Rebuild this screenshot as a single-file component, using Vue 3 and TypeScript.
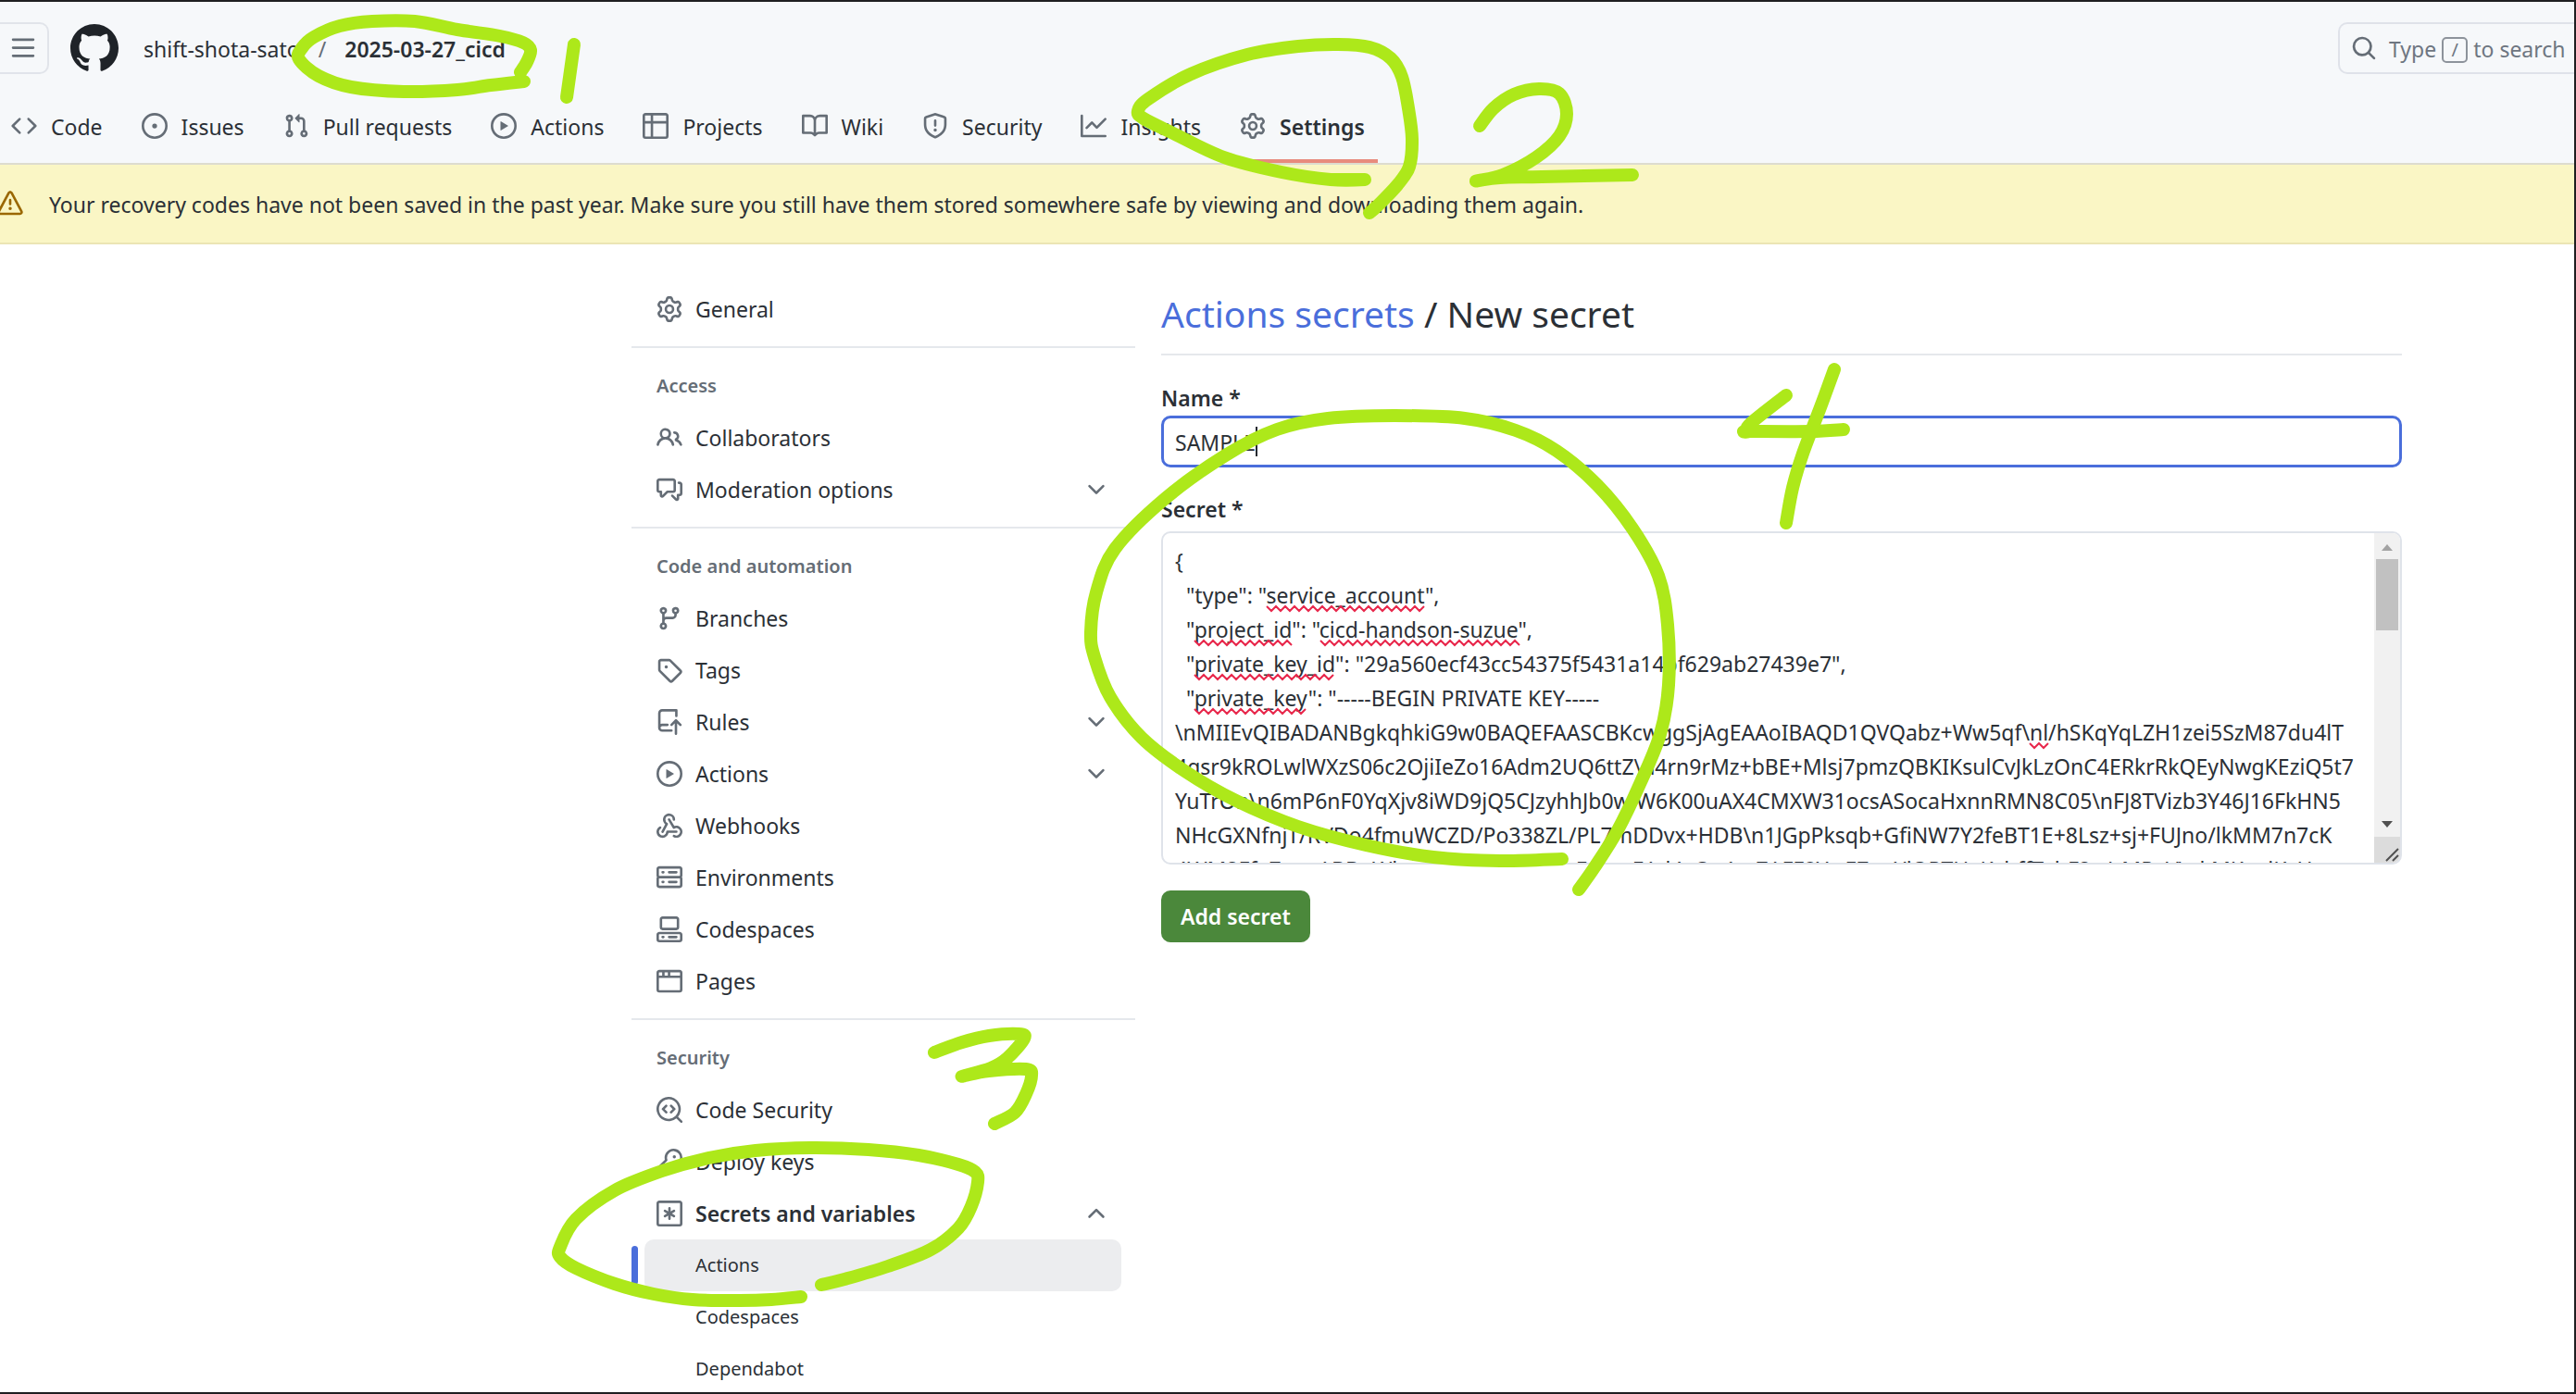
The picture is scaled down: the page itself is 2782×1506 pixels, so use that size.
<script setup lang="ts">
import { computed, ref } from 'vue'

interface Tab {
  label: string
  icon: string
  current?: boolean
}

interface NavItem {
  label: string
  icon: string
  toggle?: 'open' | 'closed'
  children?: { label: string; current?: boolean }[]
}

interface NavGroup {
  title: string
  items: NavItem[]
}

type Point = [number, number]

const icons: Record<string, string> = {
  mark: 'M8 0c4.42 0 8 3.58 8 8a8.013 8.013 0 0 1-5.45 7.59c-.4.08-.55-.17-.55-.38 0-.27.01-1.13.01-2.2 0-.75-.25-1.23-.54-1.48 1.78-.2 3.65-.88 3.65-3.95 0-.88-.31-1.59-.82-2.15.08-.2.36-1.02-.08-2.12 0 0-.67-.22-2.2.82-.64-.18-1.32-.27-2-.27-.68 0-1.36.09-2 .27-1.53-1.03-2.2-.82-2.2-.82-.44 1.1-.16 1.92-.08 2.12-.51.56-.82 1.28-.82 2.15 0 3.06 1.86 3.75 3.64 3.95-.23.2-.44.55-.51 1.07-.46.21-1.61.55-2.33-.66-.15-.24-.6-.83-1.23-.82-.67.01-.27.38.01.53.34.19.73.9.82 1.13.16.45.68 1.31 2.69.94 0 .67.01 1.3.01 1.49 0 .21-.15.45-.55.38A7.995 7.995 0 0 1 0 8c0-4.42 3.58-8 8-8Z',
  menu: 'M1 2.75A.75.75 0 0 1 1.75 2h12.5a.75.75 0 0 1 0 1.5H1.75A.75.75 0 0 1 1 2.75Zm0 5A.75.75 0 0 1 1.75 7h12.5a.75.75 0 0 1 0 1.5H1.75A.75.75 0 0 1 1 7.75ZM1.75 12h12.5a.75.75 0 0 1 0 1.5H1.75a.75.75 0 0 1 0-1.5Z',
  search: 'M10.68 11.74a6 6 0 0 1-7.922-8.982 6 6 0 0 1 8.982 7.922l3.04 3.04a.749.749 0 0 1-.326 1.275.749.749 0 0 1-.734-.215ZM11.5 7a4.499 4.499 0 1 0-8.997 0A4.499 4.499 0 0 0 11.5 7Z',
  code: 'm11.28 3.22 4.25 4.25a.75.75 0 0 1 0 1.06l-4.25 4.25a.749.749 0 0 1-1.275-.326.749.749 0 0 1 .215-.734L13.94 8l-3.72-3.72a.749.749 0 0 1 .326-1.275.749.749 0 0 1 .734.215Zm-6.56 0a.751.751 0 0 1 1.042.018.751.751 0 0 1 .018 1.042L2.06 8l3.72 3.72a.749.749 0 0 1-.326 1.275.749.749 0 0 1-.734-.215L.47 8.53a.75.75 0 0 1 0-1.06Z',
  issue: 'M8 9.5a1.5 1.5 0 1 0 0-3 1.5 1.5 0 0 0 0 3ZM8 0a8 8 0 1 1 0 16A8 8 0 0 1 8 0ZM1.5 8a6.5 6.5 0 1 0 13 0 6.5 6.5 0 0 0-13 0Z',
  pull: 'M1.5 3.25a2.25 2.25 0 1 1 3 2.122v5.256a2.251 2.251 0 1 1-1.5 0V5.372A2.25 2.25 0 0 1 1.5 3.25Zm5.677-.177L9.573.677A.25.25 0 0 1 10 .854V2.5h1A2.5 2.5 0 0 1 13.5 5v5.628a2.251 2.251 0 1 1-1.5 0V5a1 1 0 0 0-1-1h-1v1.646a.25.25 0 0 1-.427.177L7.177 3.427a.25.25 0 0 1 0-.354ZM3.75 2.5a.75.75 0 1 0 0 1.5.75.75 0 0 0 0-1.5Zm0 9.5a.75.75 0 1 0 0 1.5.75.75 0 0 0 0-1.5Zm8.25.75a.75.75 0 1 0 1.5 0 .75.75 0 0 0-1.5 0Z',
  play: 'M8 0a8 8 0 1 1 0 16A8 8 0 0 1 8 0ZM1.5 8a6.5 6.5 0 1 0 13 0 6.5 6.5 0 0 0-13 0Zm4.879-2.773 4.264 2.559a.25.25 0 0 1 0 .428l-4.264 2.559A.25.25 0 0 1 6 10.559V5.442a.25.25 0 0 1 .379-.215Z',
  table: 'M0 1.75C0 .784.784 0 1.75 0h12.5C15.216 0 16 .784 16 1.75v12.5A1.75 1.75 0 0 1 14.25 16H1.75A1.75 1.75 0 0 1 0 14.25ZM6.5 6.5v8h7.75a.25.25 0 0 0 .25-.25V6.5Zm8-1.5V1.75a.25.25 0 0 0-.25-.25H6.5V5Zm-13 1.5v7.75c0 .138.112.25.25.25H5v-8ZM5 5V1.5H1.75a.25.25 0 0 0-.25.25V5Z',
  book: 'M0 1.75A.75.75 0 0 1 .75 1h4.253c1.227 0 2.317.59 3 1.501A3.743 3.743 0 0 1 11.006 1h4.245a.75.75 0 0 1 .75.75v10.5a.75.75 0 0 1-.75.75h-4.507a2.25 2.25 0 0 0-1.591.659l-.622.621a.75.75 0 0 1-1.06 0l-.622-.621A2.25 2.25 0 0 0 5.258 13H.75a.75.75 0 0 1-.75-.75Zm7.251 10.324.004-5.073-.002-2.253A2.25 2.25 0 0 0 5.003 2.5H1.5v9h3.757a3.75 3.75 0 0 1 1.994.574ZM8.755 4.75l-.004 7.322a3.752 3.752 0 0 1 1.992-.572H14.5v-9h-3.495a2.25 2.25 0 0 0-2.25 2.25Z',
  shield: 'M7.467.133a1.748 1.748 0 0 1 1.066 0l5.25 1.68A1.75 1.75 0 0 1 15 3.48V7c0 1.566-.32 3.182-1.303 4.682-.983 1.498-2.585 2.813-5.032 3.855a1.697 1.697 0 0 1-1.33 0c-2.447-1.042-4.049-2.357-5.032-3.855C1.32 10.182 1 8.566 1 7V3.48a1.75 1.75 0 0 1 1.217-1.667Zm.61 1.429a.25.25 0 0 0-.153 0l-5.25 1.68a.25.25 0 0 0-.174.238V7c0 1.358.275 2.666 1.057 3.86.784 1.194 2.121 2.34 4.366 3.297a.196.196 0 0 0 .154 0c2.245-.956 3.582-2.104 4.366-3.298C13.225 9.666 13.5 8.36 13.5 7V3.48a.251.251 0 0 0-.174-.237l-5.25-1.68ZM8.75 4.75v3a.75.75 0 0 1-1.5 0v-3a.75.75 0 0 1 1.5 0ZM9 10.5a1 1 0 1 1-2 0 1 1 0 0 1 2 0Z',
  graph: 'M1.5 1.75V13.5h13.75a.75.75 0 0 1 0 1.5H.75a.75.75 0 0 1-.75-.75V1.75a.75.75 0 0 1 1.5 0Zm14.28 2.53-5.25 5.25a.75.75 0 0 1-1.06 0L7 7.06 4.28 9.78a.751.751 0 0 1-1.042-.018.751.751 0 0 1-.018-1.042l3.25-3.25a.75.75 0 0 1 1.06 0L10 7.94l4.72-4.72a.751.751 0 0 1 1.042.018.751.751 0 0 1 .018 1.042Z',
  gear: 'M8 0a8.2 8.2 0 0 1 .701.031C9.444.095 9.99.645 10.16 1.29l.288 1.107c.018.066.079.158.212.224.231.114.454.243.668.386.123.082.233.09.299.071l1.103-.303c.644-.176 1.392.021 1.82.63.27.385.506.792.704 1.218.315.675.111 1.422-.364 1.891l-.814.806c-.049.048-.098.147-.088.294.016.257.016.515 0 .772-.01.147.038.246.088.294l.814.806c.475.469.679 1.216.364 1.891a7.977 7.977 0 0 1-.704 1.217c-.428.61-1.176.807-1.82.63l-1.102-.302c-.067-.019-.177-.011-.3.071a5.909 5.909 0 0 1-.668.386c-.133.066-.194.158-.211.224l-.29 1.106c-.168.646-.715 1.196-1.458 1.26a8.006 8.006 0 0 1-1.402 0c-.743-.064-1.289-.614-1.458-1.26l-.289-1.106c-.018-.066-.079-.158-.212-.224a5.738 5.738 0 0 1-.668-.386c-.123-.082-.233-.09-.299-.071l-1.103.303c-.644.176-1.392-.021-1.82-.63a8.12 8.12 0 0 1-.704-1.218c-.315-.675-.111-1.422.363-1.891l.815-.806c.05-.048.098-.147.088-.294a6.214 6.214 0 0 1 0-.772c.01-.147-.038-.246-.088-.294l-.815-.806C.635 6.045.431 5.298.746 4.623a7.92 7.92 0 0 1 .704-1.217c.428-.61 1.176-.807 1.82-.63l1.102.302c.067.019.177.011.3-.071.214-.143.437-.272.668-.386.133-.066.194-.158.211-.224l.29-1.106C6.009.645 6.556.095 7.299.03 7.53.01 7.764 0 8 0Zm-.571 1.525c-.036.003-.108.036-.137.146l-.289 1.105c-.147.561-.549.967-.998 1.189-.173.086-.34.183-.5.29-.417.278-.97.423-1.529.27l-1.103-.303c-.109-.03-.175.016-.195.045-.22.312-.412.644-.573.99-.014.031-.021.11.059.19l.815.806c.411.406.562.957.53 1.456a4.709 4.709 0 0 0 0 .582c.032.499-.119 1.05-.53 1.456l-.815.806c-.081.08-.073.159-.059.19.162.346.353.677.573.989.02.03.085.076.195.046l1.102-.303c.56-.153 1.113-.008 1.53.27.161.107.328.204.501.29.447.222.85.629.997 1.189l.289 1.105c.029.109.101.143.137.146a6.6 6.6 0 0 0 1.142 0c.036-.003.108-.036.137-.146l.289-1.105c.147-.561.549-.967.998-1.189.173-.086.34-.183.5-.29.417-.278.97-.423 1.529-.27l1.103.303c.109.029.175-.016.195-.045.22-.313.411-.644.573-.99.014-.031.021-.11-.059-.19l-.815-.806c-.411-.406-.562-.957-.53-1.456a4.709 4.709 0 0 0 0-.582c-.032-.499.119-1.05.53-1.456l.815-.806c.081-.08.073-.159.059-.19a6.464 6.464 0 0 0-.573-.989c-.02-.03-.085-.076-.195-.046l-1.102.303c-.56.153-1.113.008-1.53-.27a4.44 4.44 0 0 0-.501-.29c-.447-.222-.85-.629-.997-1.189l-.289-1.105c-.029-.11-.101-.143-.137-.146a6.6 6.6 0 0 0-1.142 0ZM11 8a3 3 0 1 1-6 0 3 3 0 0 1 6 0ZM9.5 8a1.5 1.5 0 1 0-3.001.001A1.5 1.5 0 0 0 9.5 8Z',
  alert: 'M6.457 1.047c.659-1.234 2.427-1.234 3.086 0l6.082 11.378A1.75 1.75 0 0 1 14.082 15H1.918a1.75 1.75 0 0 1-1.543-2.575Zm1.763.707a.25.25 0 0 0-.44 0L1.698 13.132a.25.25 0 0 0 .22.368h12.164a.25.25 0 0 0 .22-.368Zm.53 3.996v2.5a.75.75 0 0 1-1.5 0v-2.5a.75.75 0 0 1 1.5 0ZM9 11a1 1 0 1 1-2 0 1 1 0 0 1 2 0Z',
  people: 'M2 5.5a3.5 3.5 0 1 1 5.898 2.549 5.508 5.508 0 0 1 3.034 4.084.75.75 0 1 1-1.482.235 4 4 0 0 0-7.9 0 .75.75 0 0 1-1.482-.236A5.507 5.507 0 0 1 3.102 8.05 3.493 3.493 0 0 1 2 5.5ZM11 4a3.001 3.001 0 0 1 2.22 5.018 5.01 5.01 0 0 1 2.56 3.012.749.749 0 0 1-.885.954.752.752 0 0 1-.549-.514 3.507 3.507 0 0 0-2.522-2.372.75.75 0 0 1-.574-.73v-.352a.75.75 0 0 1 .416-.672A1.5 1.5 0 0 0 11 5.5.75.75 0 0 1 11 4Zm-5.5-.5a2 2 0 1 0-.001 3.999A2 2 0 0 0 5.5 3.5Z',
  discussion: 'M1.75 1h8.5c.966 0 1.75.784 1.75 1.75v5.5A1.75 1.75 0 0 1 10.25 10H7.061l-2.574 2.573A1.458 1.458 0 0 1 2 11.543V10h-.25A1.75 1.75 0 0 1 0 8.25v-5.5C0 1.784.784 1 1.75 1ZM1.5 2.75v5.5c0 .138.112.25.25.25h1a.75.75 0 0 1 .75.75v2.19l2.72-2.72a.749.749 0 0 1 .53-.22h3.5a.25.25 0 0 0 .25-.25v-5.5a.25.25 0 0 0-.25-.25h-8.5a.25.25 0 0 0-.25.25Zm13 2a.25.25 0 0 0-.25-.25h-.5a.75.75 0 0 1 0-1.5h.5c.966 0 1.75.784 1.75 1.75v5.5A1.75 1.75 0 0 1 14.25 12H14v1.543a1.458 1.458 0 0 1-2.487 1.03L9.22 12.28a.749.749 0 0 1 .326-1.275.749.749 0 0 1 .734.215l2.22 2.22v-2.19a.75.75 0 0 1 .75-.75h1a.25.25 0 0 0 .25-.25Z',
  branch: 'M9.5 3.25a2.25 2.25 0 1 1 3 2.122V6A2.5 2.5 0 0 1 10 8.5H6a1 1 0 0 0-1 1v1.128a2.251 2.251 0 1 1-1.5 0V5.372a2.25 2.25 0 1 1 1.5 0v1.836A2.493 2.493 0 0 1 6 7h4a1 1 0 0 0 1-1v-.628A2.25 2.25 0 0 1 9.5 3.25Zm-6 0a.75.75 0 1 0 1.5 0 .75.75 0 0 0-1.5 0Zm8.25-.75a.75.75 0 1 0 0 1.5.75.75 0 0 0 0-1.5ZM4.25 12a.75.75 0 1 0 0 1.5.75.75 0 0 0 0-1.5Z',
  tag: 'M1 7.775V2.75C1 1.784 1.784 1 2.75 1h5.025c.464 0 .91.184 1.238.513l6.25 6.25a1.75 1.75 0 0 1 0 2.474l-5.026 5.026a1.75 1.75 0 0 1-2.474 0l-6.25-6.25A1.752 1.752 0 0 1 1 7.775Zm1.5 0c0 .066.026.13.073.177l6.25 6.25a.25.25 0 0 0 .354 0l5.025-5.025a.25.25 0 0 0 0-.354l-6.25-6.25a.25.25 0 0 0-.177-.073H2.75a.25.25 0 0 0-.25.25ZM6 5a1 1 0 1 1 0 2 1 1 0 0 1 0-2Z',
  rules: 'M1 2.5A2.5 2.5 0 0 1 3.5 0h8.75a.75.75 0 0 1 .75.75v3.5a.75.75 0 0 1-1.5 0V1.5h-8a1 1 0 0 0-1 1v6.708A2.493 2.493 0 0 1 3.5 9h3.25a.75.75 0 0 1 0 1.5H3.5a1 1 0 0 0 0 2h5.75a.75.75 0 0 1 0 1.5H3.5A2.5 2.5 0 0 1 1 11.5Zm13.23 7.79-1.48-1.48v6.44a.75.75 0 0 1-1.5 0V8.81L9.77 10.29a.751.751 0 0 1-1.042-.018.751.751 0 0 1-.018-1.042l2.76-2.76a.75.75 0 0 1 1.06 0l2.76 2.76a.749.749 0 0 1-.326 1.275.749.749 0 0 1-.734-.215Z',
  webhook: 'M5.5 4.25a2.25 2.25 0 0 1 4.5 0 .75.75 0 0 0 1.5 0 3.75 3.75 0 1 0-6.14 2.889l-2.272 4.258a.75.75 0 0 0 1.324.706L7 7.25a.75.75 0 0 0-.309-1.015A2.25 2.25 0 0 1 5.5 4.25ZM7.364 3.607a.75.75 0 0 1 1.03.257l2.608 4.349a3.75 3.75 0 1 1-.628 6.785.75.75 0 0 1 .752-1.299 2.25 2.25 0 1 0-.033-3.88.75.75 0 0 1-1.03-.256L7.107 4.636a.75.75 0 0 1 .257-1.03ZM2.9 8.776A.75.75 0 0 1 2.625 9.8 2.25 2.25 0 1 0 6 11.75a.75.75 0 0 1 .75-.751h5.5a.75.75 0 0 1 0 1.5H7.425a3.751 3.751 0 1 1-5.55-3.998.75.75 0 0 1 1.024.274Z',
  server: 'M1.75 1h12.5c.966 0 1.75.784 1.75 1.75v4c0 .372-.116.717-.314 1 .198.283.314.628.314 1v4a1.75 1.75 0 0 1-1.75 1.75H1.75A1.75 1.75 0 0 1 0 12.75v-4c0-.358.109-.707.314-1a1.739 1.739 0 0 1-.314-1v-4C0 1.784.784 1 1.75 1ZM1.5 2.75v4c0 .138.112.25.25.25h12.5a.25.25 0 0 0 .25-.25v-4a.25.25 0 0 0-.25-.25H1.75a.25.25 0 0 0-.25.25Zm.25 5.75a.25.25 0 0 0-.25.25v4c0 .138.112.25.25.25h12.5a.25.25 0 0 0 .25-.25v-4a.25.25 0 0 0-.25-.25ZM7 4.75A.75.75 0 0 1 7.75 4h4.5a.75.75 0 0 1 0 1.5h-4.5A.75.75 0 0 1 7 4.75ZM7.75 10h4.5a.75.75 0 0 1 0 1.5h-4.5a.75.75 0 0 1 0-1.5ZM3 4.75A.75.75 0 0 1 3.75 4h.5a.75.75 0 0 1 0 1.5h-.5A.75.75 0 0 1 3 4.75ZM3.75 10h.5a.75.75 0 0 1 0 1.5h-.5a.75.75 0 0 1 0-1.5Z',
  codespaces: 'M0 11.25c0-.966.784-1.75 1.75-1.75h12.5c.966 0 1.75.784 1.75 1.75v3A1.75 1.75 0 0 1 14.25 16H1.75A1.75 1.75 0 0 1 0 14.25Zm2-9.5C2 .784 2.784 0 3.75 0h8.5C13.216 0 14 .784 14 1.75v5a1.75 1.75 0 0 1-1.75 1.75h-8.5A1.75 1.75 0 0 1 2 6.75Zm1.75-.25a.25.25 0 0 0-.25.25v5c0 .138.112.25.25.25h8.5a.25.25 0 0 0 .25-.25v-5a.25.25 0 0 0-.25-.25Zm-2 9.5a.25.25 0 0 0-.25.25v3c0 .138.112.25.25.25h12.5a.25.25 0 0 0 .25-.25v-3a.25.25 0 0 0-.25-.25ZM7 12.75a.75.75 0 0 1 .75-.75h4.5a.75.75 0 0 1 0 1.5h-4.5a.75.75 0 0 1-.75-.75Zm-4 0a.75.75 0 0 1 .75-.75h.5a.75.75 0 0 1 0 1.5h-.5a.75.75 0 0 1-.75-.75Z',
  browser: 'M0 2.75C0 1.784.784 1 1.75 1h12.5c.966 0 1.75.784 1.75 1.75v10.5A1.75 1.75 0 0 1 14.25 15H1.75A1.75 1.75 0 0 1 0 13.25ZM14.5 6h-13v7.25c0 .138.112.25.25.25h12.5a.25.25 0 0 0 .25-.25Zm-6-3.5v2h6V2.75a.25.25 0 0 0-.25-.25ZM5 2.5v2h2v-2Zm-3.25 0a.25.25 0 0 0-.25.25V4.5h2v-2Z',
  codescan: 'M8.47 4.97a.75.75 0 0 0 0 1.06L9.94 7.5 8.47 8.97a.75.75 0 1 0 1.06 1.06l2-2a.75.75 0 0 0 0-1.06l-2-2a.75.75 0 0 0-1.06 0ZM6.53 6.03a.75.75 0 0 0-1.06-1.06l-2 2a.75.75 0 0 0 0 1.06l2 2a.75.75 0 1 0 1.06-1.06L5.06 7.5l1.47-1.47ZM12.246 13.307a7.501 7.501 0 1 1 1.06-1.06l2.474 2.473a.75.75 0 1 1-1.06 1.06l-2.474-2.473ZM1.5 7.5a6.002 6.002 0 0 0 3.608 5.504 6.002 6.002 0 0 0 6.486-1.117.748.748 0 0 1 .292-.293A6 6 0 1 0 1.5 7.5Z',
  key: 'M10.5 0a5.499 5.499 0 1 1-1.288 10.848l-.932.932a.749.749 0 0 1-.53.22H7v.75a.749.749 0 0 1-.22.53l-.5.5a.749.749 0 0 1-.53.22H5v.75a.749.749 0 0 1-.22.53l-.5.5a.749.749 0 0 1-.53.22h-2A1.75 1.75 0 0 1 0 14.25v-2c0-.199.079-.389.22-.53l4.932-4.932A5.5 5.5 0 0 1 10.5 0Zm-4 5.5c-.001.431.069.86.205 1.269a.75.75 0 0 1-.181.768L1.5 12.56v1.69c0 .138.112.25.25.25h1.69l.06-.06v-1.19a.75.75 0 0 1 .75-.75h1.19l.06-.06v-1.19a.75.75 0 0 1 .75-.75h1.19l1.023-1.025a.75.75 0 0 1 .768-.18A4 4 0 1 0 6.5 5.5ZM11 6a1 1 0 1 1 0-2 1 1 0 0 1 0 2Z',
  asterisk: 'M0 1.75C0 .784.784 0 1.75 0h12.5C15.216 0 16 .784 16 1.75v12.5A1.75 1.75 0 0 1 14.25 16H1.75A1.75 1.75 0 0 1 0 14.25Zm1.75-.25a.25.25 0 0 0-.25.25v12.5c0 .138.112.25.25.25h12.5a.25.25 0 0 0 .25-.25V1.75a.25.25 0 0 0-.25-.25ZM8 4a.75.75 0 0 1 .75.75V6.7l1.69-.975a.75.75 0 0 1 .75 1.3L9.5 8l1.69.976a.75.75 0 0 1-.75 1.298L8.75 9.3v1.951a.75.75 0 0 1-1.5 0V9.299l-1.69.976a.75.75 0 0 1-.75-1.3L6.5 8l-1.69-.975a.75.75 0 0 1 .75-1.3l1.69.976V4.75A.75.75 0 0 1 8 4Z',
  down: 'M12.78 5.22a.749.749 0 0 1 0 1.06l-4.25 4.25a.749.749 0 0 1-1.06 0L3.22 6.28a.749.749 0 1 1 1.06-1.06L8 8.939l3.72-3.719a.749.749 0 0 1 1.06 0Z',
  up: 'M3.22 10.53a.749.749 0 0 1 0-1.06l4.25-4.25a.749.749 0 0 1 1.06 0l4.25 4.25a.749.749 0 1 1-1.06 1.06L8 6.811 4.28 10.53a.749.749 0 0 1-1.06 0Z',
}

const tabs: Tab[] = [
  { label: 'Code', icon: 'code' },
  { label: 'Issues', icon: 'issue' },
  { label: 'Pull requests', icon: 'pull' },
  { label: 'Actions', icon: 'play' },
  { label: 'Projects', icon: 'table' },
  { label: 'Wiki', icon: 'book' },
  { label: 'Security', icon: 'shield' },
  { label: 'Insights', icon: 'graph' },
  { label: 'Settings', icon: 'gear', current: true },
]

const groups: NavGroup[] = [
  { title: '', items: [{ label: 'General', icon: 'gear' }] },
  {
    title: 'Access',
    items: [
      { label: 'Collaborators', icon: 'people' },
      { label: 'Moderation options', icon: 'discussion', toggle: 'closed' },
    ],
  },
  {
    title: 'Code and automation',
    items: [
      { label: 'Branches', icon: 'branch' },
      { label: 'Tags', icon: 'tag' },
      { label: 'Rules', icon: 'rules', toggle: 'closed' },
      { label: 'Actions', icon: 'play', toggle: 'closed' },
      { label: 'Webhooks', icon: 'webhook' },
      { label: 'Environments', icon: 'server' },
      { label: 'Codespaces', icon: 'codespaces' },
      { label: 'Pages', icon: 'browser' },
    ],
  },
  {
    title: 'Security',
    items: [
      { label: 'Code Security', icon: 'codescan' },
      { label: 'Deploy keys', icon: 'key' },
      {
        label: 'Secrets and variables',
        icon: 'asterisk',
        toggle: 'open',
        children: [{ label: 'Actions', current: true }, { label: 'Codespaces' }, { label: 'Dependabot' }],
      },
    ],
  },
]

const name = ref('SAMPLE')

const secret = ref(
  [
    '{',
    '  "type": "service_account",',
    '  "project_id": "cicd-handson-suzue",',
    '  "private_key_id": "29a560ecf43cc54375f5431a14bf629ab27439e7",',
    '  "private_key": "-----BEGIN PRIVATE KEY-----',
    '\\nMIIEvQIBADANBgkqhkiG9w0BAQEFAASCBKcwggSjAgEAAoIBAQD1QVQabz+Ww5qf\\nl/hSKqYqLZH1zei5SzM87du4lT',
    '4qsr9kROLwlWXzS06c2OjiIeZo16Adm2UQ6ttZ\\n4rn9rMz+bBE+Mlsj7pmzQBKIKsulCvJkLzOnC4ERkrRkQEyNwgKEziQ5t7',
    'YuTrOn\\n6mP6nF0YqXjv8iWD9jQ5CJzyhhJb0wiW6K00uAX4CMXW31ocsASocaHxnnRMN8C05\\nFJ8TVizb3Y46J16FkHN5',
    'NHcGXNfnjT/RVDo4fmuWCZD/Po338ZL/PL7mDDvx+HDB\\n1JGpPksqb+GfiNW7Y2feBT1E+8Lsz+sj+FUJno/lkMM7n7cK',
    '4WM2FfeZuoxABBoWlcnaocscorsvMBAzECmxEAd4oSw1ta7AFF8YwEZnaYiQPTHxKvbffTxbF2o/zMPaV\\nkMKwtiKcH',
  ].join('\n'),
)

const pen = document.createElement('canvas').getContext('2d')!
pen.font = '23px "Noto Sans"'

const textWidth = (text: string) => Math.round(pen.measureText(text).width)

const caretLeft = computed(() => textWidth(name.value))

const lineHeight = 37

// Zigzag lines below the words the spell checker marks.
const squiggles = computed(() =>
  secret.value.split('\n').flatMap((line, row) =>
    [...line.matchAll(/service_account|project_id|cicd-handson-suzue|private_key_id|private_key|nl(?=\/)/g)].map((match) => {
      const start = textWidth(line.slice(0, match.index))
      const end = start + textWidth(match[0])
      const base = row * lineHeight + 32
      let d = `M${start} ${base - 2}`
      for (let x = start + 5, low = true; x <= end; x += 5, low = !low) {
        d += `L${x} ${low ? base + 3 : base - 2}`
      }
      return d
    }),
  ),
)

// Turns hand-placed points into a smooth pen stroke.
function stroke(points: Point[]): string {
  let d = `M${points[0][0]} ${points[0][1]}`
  for (let i = 0; i < points.length - 1; i++) {
    const a = points[Math.max(i - 1, 0)]
    const b = points[i]
    const c = points[i + 1]
    const e = points[Math.min(i + 2, points.length - 1)]
    d += `C${b[0] + (c[0] - a[0]) / 6} ${b[1] + (c[1] - a[1]) / 6} ${c[0] - (e[0] - b[0]) / 6} ${c[1] - (e[1] - b[1]) / 6} ${c[0]} ${c[1]}`
  }
  return d
}

const strokes = [
  [[566, 88], [530, 92], [494, 97], [436, 99], [379, 94], [344, 82], [323, 64], [326, 52], [339, 40], [367, 28], [402, 23], [448, 23], [494, 32], [540, 39], [565, 46], [573, 54], [569, 67], [562, 78]],
  [[620, 48], [612, 105]],
  [[1437, 194], [1474, 194], [1437, 194], [1384, 186], [1322, 170], [1267, 144], [1235, 128], [1229, 120], [1240, 107], [1286, 80], [1347, 59], [1402, 50], [1445, 48], [1479, 51], [1502, 63], [1514, 83], [1521, 117], [1525, 150], [1522, 180], [1509, 200], [1488, 222], [1479, 230]],
  [[1598, 136], [1613, 117], [1635, 102], [1662, 96], [1684, 101], [1692, 123], [1684, 147], [1659, 170], [1623, 189], [1597, 195], [1597, 195], [1620, 192], [1665, 191], [1763, 189]],
  [[1009, 1137], [1039, 1126], [1068, 1119], [1100, 1117], [1106, 1122], [1088, 1143], [1070, 1154], [1042, 1162], [1042, 1162], [1068, 1157], [1108, 1155], [1114, 1162], [1108, 1182], [1096, 1202], [1074, 1214]],
  [[865, 1401], [833, 1404], [799, 1405], [748, 1404], [706, 1398], [664, 1387], [622, 1370], [605, 1358], [605, 1347], [622, 1317], [664, 1286], [715, 1265], [765, 1251], [816, 1243], [875, 1240], [938, 1242], [992, 1248], [1035, 1258], [1053, 1266], [1056, 1277], [1049, 1303], [1035, 1327], [1005, 1350], [959, 1368], [912, 1382], [887, 1388]],
  [[1929, 427], [1890, 458], [1888, 466], [1888, 466], [1955, 466], [1991, 464]],
  [[1981, 399], [1966, 440], [1947, 490], [1936, 527], [1929, 565]],
  [[1687, 928], [1620, 930], [1548, 926], [1475, 913], [1402, 893], [1335, 865], [1281, 834], [1233, 797], [1199, 753], [1182, 710], [1178, 683], [1184, 640], [1204, 593], [1259, 538], [1325, 491], [1379, 464], [1434, 452], [1506, 449], [1582, 452], [1637, 465], [1681, 487], [1725, 524], [1763, 571], [1791, 622], [1801, 675], [1802, 740], [1793, 793], [1771, 847], [1747, 897], [1722, 937], [1705, 961]],
].map((points) => stroke(points as Point[]))
</script>

<template>
  <div class="page">
    <header class="header">
      <div class="topbar">
        <button class="menu" type="button" aria-label="Open menu">
          <svg class="icon" viewBox="0 0 16 16"><path :d="icons.menu" /></svg>
        </button>
        <a class="home" href="#" aria-label="Homepage">
          <svg class="mark" viewBox="0 0 16 16"><path :d="icons.mark" /></svg>
        </a>
        <nav class="crumbs" aria-label="Breadcrumb">
          <a href="#">shift-shota-sato</a>
          <span class="slash">/</span>
          <a class="repo" href="#">2025-03-27_cicd</a>
        </nav>
        <button class="search" type="button">
          <svg class="icon" viewBox="0 0 16 16"><path :d="icons.search" /></svg>
          <span>Type</span><kbd>/</kbd><span>to search</span>
        </button>
      </div>
      <nav class="tabs" aria-label="Repository">
        <a v-for="tab in tabs" :key="tab.label" class="tab" :class="{ current: tab.current }" href="#">
          <svg class="icon" viewBox="0 0 16 16"><path :d="icons[tab.icon]" /></svg>
          <span>{{ tab.label }}</span>
        </a>
      </nav>
    </header>

    <div class="banner" role="status">
      <svg class="icon" viewBox="0 0 16 16"><path :d="icons.alert" /></svg>
      <span>Your recovery codes have not been saved in the past year. Make sure you still have them stored somewhere safe by viewing and downloading them again.</span>
    </div>

    <div class="layout">
      <nav class="sidebar" aria-label="Settings">
        <section v-for="group in groups" :key="group.title" class="group">
          <h2 v-if="group.title">{{ group.title }}</h2>
          <ul>
            <li v-for="item in group.items" :key="item.label">
              <a class="item" :class="{ bold: item.toggle === 'open' }" href="#">
                <svg class="icon" viewBox="0 0 16 16"><path :d="icons[item.icon]" /></svg>
                <span class="label">{{ item.label }}</span>
                <svg v-if="item.toggle" class="icon" viewBox="0 0 16 16">
                  <path :d="item.toggle === 'open' ? icons.up : icons.down" />
                </svg>
              </a>
              <ul v-if="item.children">
                <li v-for="child in item.children" :key="child.label" class="child" :class="{ current: child.current }">
                  <a href="#">{{ child.label }}</a>
                </li>
              </ul>
            </li>
          </ul>
        </section>
      </nav>

      <main class="main">
        <h1><a href="#">Actions secrets</a> / New secret</h1>
        <form @submit.prevent>
          <label for="secret-name">Name *</label>
          <div class="name-field">
            <input id="secret-name" v-model="name" type="text" autocomplete="off" spellcheck="false" />
            <i class="caret" :style="{ marginLeft: caretLeft + 'px' }"></i>
          </div>
          <label class="second" for="secret-value">Secret *</label>
          <div class="secret-field">
            <div class="text">
              <textarea id="secret-value" v-model="secret" spellcheck="false" wrap="off"></textarea>
              <svg class="spelling" aria-hidden="true"><path v-for="(d, i) in squiggles" :key="i" :d="d" /></svg>
            </div>
            <div class="scrollbar" aria-hidden="true">
              <svg class="arrow dim" viewBox="0 0 28 28"><path d="M8 19 14 12 20 19Z" /></svg>
              <div class="thumb"></div>
              <svg class="arrow" viewBox="0 0 28 28"><path d="M8 11 14 18 20 11Z" /></svg>
              <svg class="grip" viewBox="0 0 28 28"><path d="M13 26 26 13M20 26 26 20" /></svg>
            </div>
          </div>
          <button class="submit" type="submit">Add secret</button>
        </form>
      </main>
    </div>

    <svg class="ink" width="2782" height="1506" viewBox="0 0 2782 1506" aria-hidden="true">
      <path v-for="(d, i) in strokes" :key="i" :d="d" />
    </svg>
  </div>
</template>

<style>
body {
  margin: 0;
}
</style>

<style scoped>
.page {
  position: relative;
  box-sizing: border-box;
  height: 100vh;
  overflow: hidden;
  border: solid #1f1f21;
  border-width: 2px 2px 2px 0;
  background: #fff;
  color: #2b3036;
  font-family: "Noto Sans", "Open Sans", sans-serif;
  font-size: 23px;
  line-height: 37px;
}

a {
  color: inherit;
  text-decoration: none;
}

ul {
  margin: 0;
  padding: 0;
  list-style: none;
}

button,
input,
textarea {
  font: inherit;
  color: inherit;
}

.icon {
  flex: none;
  width: 28px;
  height: 28px;
  fill: #656d76;
}

.header {
  padding-top: 22px;
  border-bottom: 2px solid #dddccf;
  background: #f6f8fa;
}

.topbar {
  display: flex;
  align-items: center;
  height: 56px;
}

.menu {
  display: flex;
  align-items: center;
  justify-content: flex-end;
  box-sizing: border-box;
  width: 53px;
  height: 56px;
  padding: 0 12px 0 0;
  border: 2px solid #e1e4ea;
  border-left: 0;
  border-radius: 0 10px 10px 0;
  background: none;
}

.home {
  display: flex;
  margin: 0 27px 0 23px;
}

.mark {
  width: 52px;
  height: 52px;
  fill: #1f2328;
}

.crumbs {
  display: flex;
  flex: 1;
  gap: 20px;
  padding-top: 2px;
}

.slash {
  color: #656d76;
}

.repo {
  font-weight: 600;
}

.search {
  display: flex;
  align-items: center;
  box-sizing: border-box;
  width: 255px;
  height: 56px;
  padding: 0 0 0 12px;
  border: 2px solid #dfe2e9;
  border-right: 0;
  border-radius: 10px 0 0 10px;
  background: none;
  color: #6e7681;
  white-space: nowrap;
}

.search .icon {
  margin-right: 13px;
}

.search span {
  padding-top: 2px;
}

kbd {
  box-sizing: border-box;
  width: 28px;
  height: 28px;
  margin: 4px 6px 0;
  border: 2px solid #8d939b;
  border-radius: 5px;
  font: inherit;
  font-size: 20px;
  line-height: 24px;
  text-align: center;
}

.tabs {
  display: flex;
  gap: 14px;
  height: 80px;
  margin: 16px 0 0 -2px;
}

.tab {
  display: flex;
  align-items: center;
  gap: 15px;
  box-sizing: border-box;
  padding: 4px 14px 0;
  border-bottom: 4px solid transparent;
}

.tab span,
.banner span {
  padding-top: 2px;
}

.tab.current {
  border-color: #e88b7d;
  font-weight: 600;
}

.banner {
  display: flex;
  align-items: center;
  gap: 28px;
  height: 84px;
  margin-left: -3px;
  border-bottom: 2px solid #ebe5b4;
  background: #faf6c5;
}

.banner .icon {
  fill: #9a6700;
}

.layout {
  display: grid;
  grid-template-columns: 544px 1fr;
  gap: 28px;
  padding: 42px 186px 0 682px;
}

.group + .group {
  margin-top: 12px;
  padding-top: 13px;
  border-top: 2px solid #e5e8ec;
}

h2 {
  margin: 0;
  padding-left: 27px;
  color: #656d76;
  font-size: 20px;
  font-weight: 600;
  line-height: 56px;
}

.item {
  display: flex;
  align-items: center;
  gap: 14px;
  height: 56px;
  padding: 0 28px 0 27px;
}

.item .label {
  flex: 1;
}

.item.bold {
  font-weight: 600;
}

.child {
  display: flex;
  height: 56px;
  font-size: 20px;
  line-height: 56px;
}

.child a {
  flex: 1;
  margin: 0 15px 0 14px;
  padding-left: 55px;
  border-radius: 10px;
}

.child.current::before {
  width: 7px;
  height: 42px;
  margin: 7px -7px 0 0;
  border-radius: 4px;
  background: #4a6edb;
  content: "";
}

.child.current a {
  background: #ecedef;
}

.main {
  min-width: 0;
  padding-top: 5px;
}

h1 {
  margin: 0 0 28px;
  padding-bottom: 15px;
  border-bottom: 2px solid #e5e8ec;
  font-size: 39px;
  font-weight: 400;
  line-height: 56px;
}

h1 a {
  color: #4a6edb;
}

label {
  display: block;
  font-weight: 600;
}

label.second {
  margin: 27px 0 5px;
}

.name-field {
  position: relative;
}

input {
  display: block;
  box-sizing: border-box;
  width: 100%;
  height: 56px;
  padding: 2px 12px 0;
  border: 3px solid #4a6edb;
  border-radius: 10px;
  outline: 0;
  background: #fff;
}

.caret {
  position: absolute;
  top: 12px;
  left: 15px;
  width: 2px;
  height: 32px;
  background: #24292f;
}

.secret-field {
  display: flex;
  box-sizing: border-box;
  height: 360px;
  overflow: hidden;
  border: 2px solid #dfe3ea;
  border-radius: 10px;
}

.text {
  position: relative;
  flex: 1;
  min-width: 0;
  overflow: hidden;
}

textarea {
  display: block;
  box-sizing: border-box;
  width: 100%;
  height: 100%;
  margin: 0;
  padding: 12px 0 0 13px;
  overflow: hidden;
  border: 0;
  outline: 0;
  background: none;
  line-height: 37px;
  white-space: pre;
  resize: none;
}

.spelling {
  position: absolute;
  top: 12px;
  left: 13px;
  width: 100%;
  height: 100%;
  fill: none;
  stroke: #e8274b;
  stroke-width: 2;
  pointer-events: none;
}

.scrollbar {
  display: flex;
  flex-direction: column;
  width: 28px;
  background: #f1f1f1;
}

.arrow {
  height: 28px;
  fill: #505050;
}

.arrow.dim {
  fill: #a3a3a3;
}

.thumb {
  height: 77px;
  margin: 0 2px auto;
  background: #c1c1c1;
}

.grip {
  height: 28px;
  fill: none;
  stroke: #505050;
  stroke-width: 2;
  background: #dcdcdc;
}

.submit {
  height: 56px;
  margin-top: 28px;
  padding: 0 21px;
  border: 0;
  border-radius: 10px;
  background: #4b883b;
  color: #fff;
  font-weight: 600;
}

.ink {
  position: absolute;
  top: -2px;
  left: 0;
  fill: none;
  stroke: #ade81a;
  stroke-width: 14;
  stroke-linecap: round;
  stroke-linejoin: round;
  pointer-events: none;
}
</style>
